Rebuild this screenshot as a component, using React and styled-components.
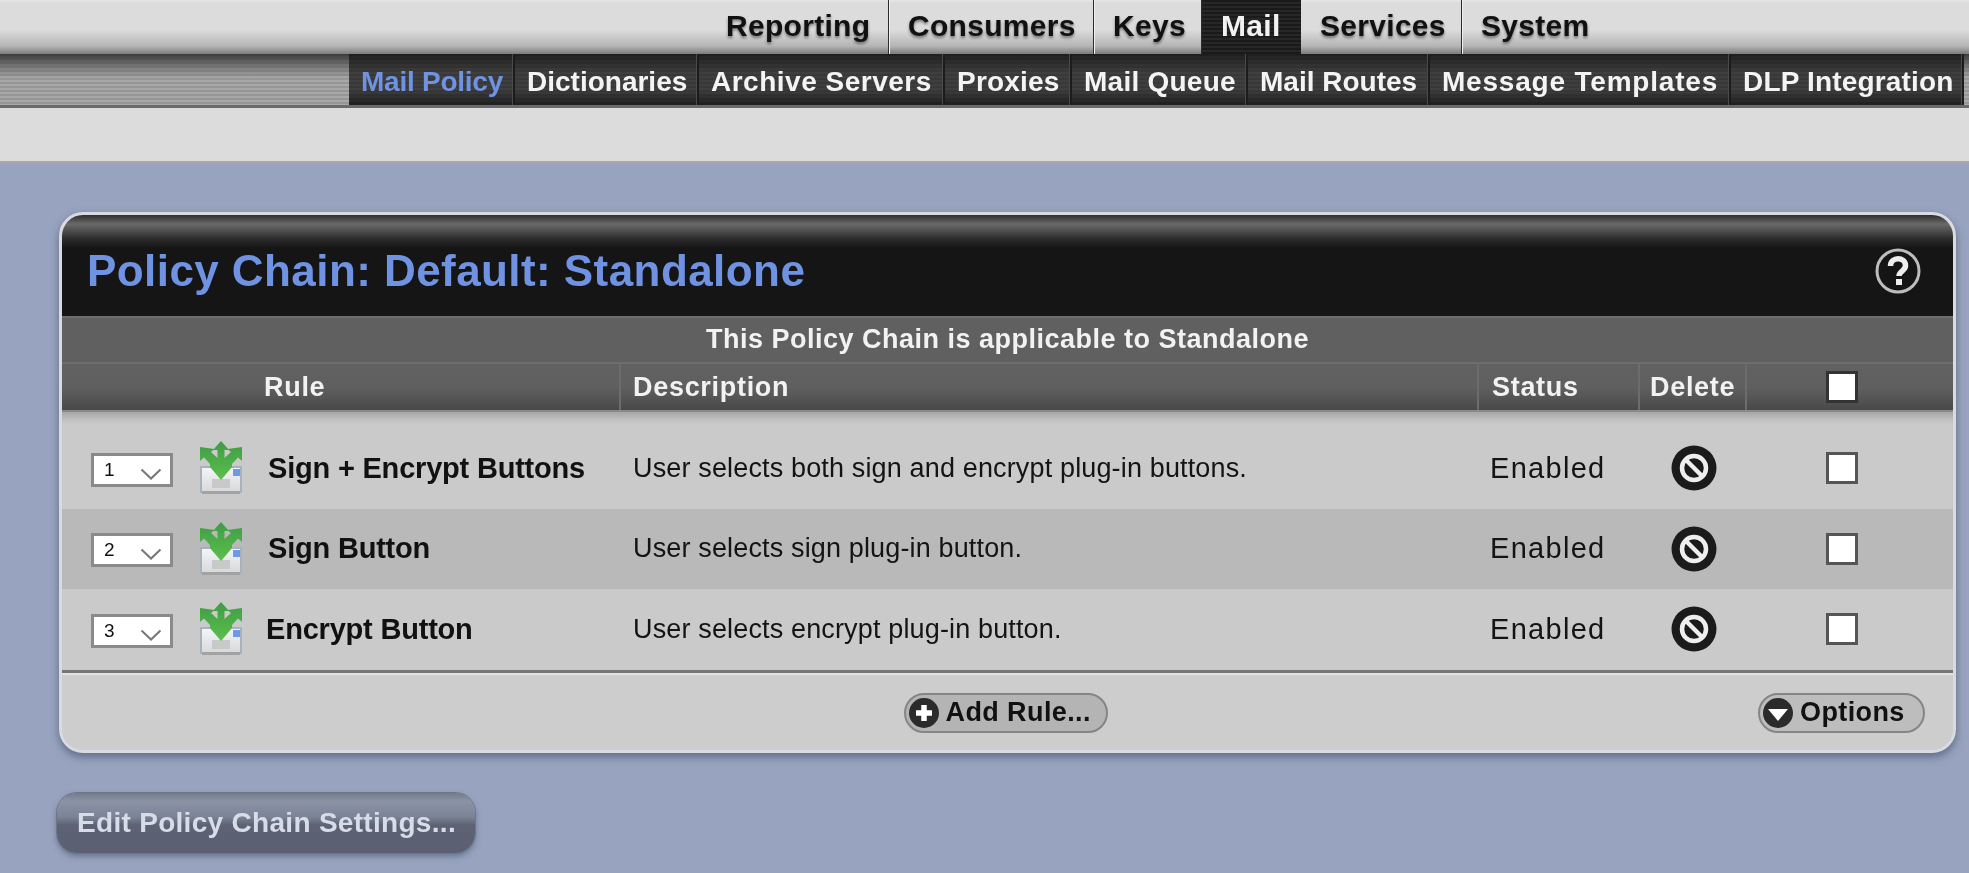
import React from 'react'
import styled, { createGlobalStyle } from 'styled-components'

const mainTabs = [
    { label: 'Reporting', width: 182 },
    { label: 'Consumers', width: 205 },
    { label: 'Keys', width: 108 },
    { label: 'Mail', width: 99, active: true },
    { label: 'Services', width: 161 },
    { label: 'System', width: 130, last: true },
]

const subTabs = [
    { label: 'Mail Policy', width: 166, spacing: -0.25, active: true },
    { label: 'Dictionaries', width: 184, spacing: 0 },
    { label: 'Archive Servers', width: 246, spacing: 0.5 },
    { label: 'Proxies', width: 127, spacing: 0.2 },
    { label: 'Mail Queue', width: 176, spacing: 0.25 },
    { label: 'Mail Routes', width: 182, spacing: 0 },
    { label: 'Message Templates', width: 301, spacing: 0.8 },
    { label: 'DLP Integration', width: 233, spacing: 0.17 },
]

const rules = [
    { id: 1, name: 'Sign + Encrypt Buttons', desc: 'User selects both sign and encrypt plug-in buttons.' },
    { id: 2, name: 'Sign Button', desc: 'User selects sign plug-in button.' },
    { id: 3, name: 'Encrypt Button', desc: 'User selects encrypt plug-in button.', tight: true },
]

const GlobalStyle = createGlobalStyle`
    html, body {
        margin: 0;
        padding: 0;
        background: #98a4bf;
    }
    body {
        font-family: "Liberation Sans", Arial, sans-serif;
        overflow: hidden;
    }
`

const Page = styled.div`
    width: 1969px;
    height: 873px;
    background: #98a4bf;
    overflow: hidden;
    filter: blur(0.5px);
`

const TopBar = styled.nav`
    height: 54px;
    box-sizing: border-box;
    padding-left: 707px;
    display: flex;
    background: linear-gradient(#e6e6e6 0, #dcdcdc 3px, #dcdcdc 30px, #b5b5b5 46px, #7c7c7c 54px);
`

const MainTab = styled.div`
    width: ${({ $width }) => $width}px;
    height: 54px;
    box-sizing: border-box;
    padding-left: 19px;
    font-size: 30px;
    font-weight: 700;
    line-height: 52px;
    letter-spacing: 0.3px;
    white-space: nowrap;
    color: ${({ $active }) => ($active ? '#f2f2f2' : '#111')};
    text-shadow: ${({ $active }) => ($active ? 'none' : '0 2px 3px rgba(0, 0, 0, 0.45)')};
    border-right: ${({ $last, $active }) => ($last || $active ? '0' : '1px solid #2c2c2c')};
    box-shadow: ${({ $last, $active }) => ($last || $active ? 'none' : '1px 0 0 #f0f0f0')};
    background: ${({ $active }) => ($active ? 'repeating-linear-gradient(#1a1a1a 0, #1a1a1a 2px, #272727 2px, #272727 4px)' : 'transparent')};
`

const SubBar = styled.nav`
    height: 54px;
    box-sizing: border-box;
    display: flex;
    justify-content: flex-end;
    padding-right: 5px;
    border-bottom: 3px solid #6a6a6a;
    background:
        linear-gradient(rgba(50, 50, 50, 0.9) 0, rgba(70, 70, 70, 0.5) 12px, rgba(120, 120, 120, 0) 24px),
        repeating-linear-gradient(#969696 0, #969696 2px, #a8a8a8 2px, #a8a8a8 4px);
`

const SubTab = styled.div`
    width: ${({ $width }) => $width}px;
    box-sizing: border-box;
    padding-left: 12px;
    font-size: 28px;
    font-weight: 700;
    line-height: 55px;
    letter-spacing: ${({ $spacing }) => $spacing}px;
    white-space: nowrap;
    color: ${({ $active }) => ($active ? '#6f92e2' : '#f4f4f4')};
    border-right: 2px solid #1c1c1c;
    box-shadow: inset -1px 0 0 #4a4a4a;
    background:
        linear-gradient(rgba(12, 12, 12, 0.6) 0, rgba(12, 12, 12, 0) 18px, rgba(12, 12, 12, 0) 36px, rgba(12, 12, 12, 0.6) 51px),
        repeating-linear-gradient(#383838 0, #383838 2px, #3f3f3f 2px, #3f3f3f 4px);
`

const Band = styled.div`
    height: 55px;
    box-sizing: border-box;
    background: #dcdcdc;
    border-bottom: 2px solid #a8a8a8;
`

const Panel = styled.section`
    width: 1897px;
    margin: 49px 0 0 59px;
    box-sizing: border-box;
    border: 3px solid #d8dbe2;
    border-radius: 24px;
    overflow: hidden;
    background: #cbcbcb;
    box-shadow: 0 4px 8px rgba(50, 58, 85, 0.55);
`

const PanelHead = styled.header`
    height: 101px;
    box-sizing: border-box;
    display: flex;
    align-items: center;
    justify-content: space-between;
    padding: 11px 31px 0 25px;
    background: linear-gradient(#2e2e2e 0, #6a6a6a 9px, #2c2c2c 24px, #151515 33px, #151515 100%);
`

const PanelTitle = styled.h1`
    margin: 0;
    font-size: 44px;
    font-weight: 700;
    letter-spacing: 0.43px;
    color: #6f92e2;
`

const HelpButton = styled.svg`
    width: 48px;
    height: 48px;
`

const Notice = styled.div`
    height: 46px;
    box-sizing: border-box;
    text-align: center;
    font-size: 27px;
    font-weight: 700;
    line-height: 42px;
    letter-spacing: 0.5px;
    color: #f2f2f2;
    background: #606060;
    border-top: 2px solid #6e6e6e;
`

const ruleColumns = '559px 858px 161px 107px 206px'

const HeadRow = styled.div`
    height: 50px;
    box-sizing: border-box;
    display: grid;
    grid-template-columns: ${ruleColumns};
    border-top: 2px solid #6e6e6e;
    border-bottom: 2px solid #8a8a8a;
    background: linear-gradient(#616161 0, #5f5f5f 24px, #464646 48px);
`

const HeadCell = styled.div`
    box-sizing: border-box;
    padding-left: ${({ $pad }) => $pad || 12}px;
    font-size: 27px;
    font-weight: 700;
    line-height: 44px;
    letter-spacing: 0.7px;
    color: #f2f2f2;
    border-right: ${({ $plain }) => ($plain ? '0' : '2px solid #6c6c6c')};
    display: flex;
    align-items: center;
`

const RowList = styled.div`
    padding-top: 16px;
    background: #cacaca;
    box-shadow: inset 0 12px 10px -8px rgba(0, 0, 0, 0.22);
`

const Row = styled.div`
    height: 80.5px;
    display: grid;
    grid-template-columns: ${ruleColumns};
    align-items: center;
    background: ${({ $odd }) => ($odd ? '#b9b9b9' : 'transparent')};
`

const RuleCell = styled.div`
    display: flex;
    align-items: center;
    padding-left: 29px;
`

const OrderSelect = styled.div`
    width: 82px;
    height: 34px;
    box-sizing: border-box;
    display: flex;
    align-items: center;
    justify-content: space-between;
    margin-top: 3px;
    padding: 0 8px 0 10px;
    border: 3px solid #8a8a8a;
    background: #fff;
    font-size: 19px;
    color: #111;
`

const Chevron = styled.svg`
    width: 22px;
    height: 12px;
    margin-top: 8px;
`

const RuleIcon = styled.svg`
    width: 42px;
    height: 54px;
    margin: 0 26px 0 27px;
    flex: none;
`

const RuleName = styled.span`
    font-size: 29px;
    font-weight: 700;
    letter-spacing: -0.2px;
    white-space: nowrap;
    color: #111;
    margin-left: ${({ $tight }) => ($tight ? -2 : 0)}px;
`

const DescCell = styled.div`
    padding-left: 12px;
    font-size: 27px;
    letter-spacing: 0.15px;
    color: #141414;
`

const StatusCell = styled.div`
    padding-left: 11px;
    font-size: 29px;
    letter-spacing: 1.3px;
    color: #141414;
`

const CenterCell = styled.div`
    display: flex;
    justify-content: center;
`

const DeleteIcon = styled.svg`
    width: 46px;
    height: 46px;
`

const CheckCell = styled.div`
    padding-left: 79px;
`

const CheckBox = styled.div`
    width: 32px;
    height: 32px;
    box-sizing: border-box;
    background: #fff;
    border: 3px solid ${({ $head }) => ($head ? '#333' : '#555')};
`

const PanelFoot = styled.footer`
    height: 80px;
    position: relative;
    box-sizing: border-box;
    display: flex;
    justify-content: center;
    align-items: center;
    padding: 3px 4px 0 0;
    border-top: 3px solid #777;
    box-shadow: inset 0 2px 0 #e2e2e2;
    background: #cdcdcd;
`

const PillButton = styled.div`
    height: 40px;
    width: ${({ $width }) => $width}px;
    box-sizing: border-box;
    display: flex;
    align-items: center;
    gap: 7px;
    padding-left: 3px;
    border: 2px solid #858585;
    border-radius: 20px;
    background: #b4b4b4;
    font-size: 27px;
    font-weight: 700;
    letter-spacing: 0.4px;
    white-space: nowrap;
    color: #111;
`

const OptionsButton = styled(PillButton)`
    position: absolute;
    right: 28px;
    top: 20px;
    background: #bdbdbd;
`

const PillIcon = styled.svg`
    width: 30px;
    height: 30px;
    flex: none;
`

const EditButton = styled.div`
    width: 418px;
    height: 60px;
    box-sizing: border-box;
    margin: 40px 0 0 57px;
    padding-left: 20px;
    border-radius: 20px;
    font-size: 28px;
    font-weight: 700;
    line-height: 59px;
    letter-spacing: 0.3px;
    white-space: nowrap;
    color: #d6dce8;
    background: linear-gradient(#727a8c 0, #8b93a5 8px, #7b8396 24px, #5d6374 32px, #5a6071 100%);
    box-shadow: 0 0 0 1px #6d7588, 0 3px 6px rgba(50, 58, 85, 0.5);
`

const Envelope = () => (
    <RuleIcon viewBox="1 0 42 54">
        <defs>
            <linearGradient id="envFill" x1="0" y1="0" x2="0" y2="1">
                <stop offset="0" stopColor="#f4f6fa" />
                <stop offset="1" stopColor="#d6d8da" />
            </linearGradient>
            <linearGradient id="arrowFill" x1="0" y1="0" x2="0" y2="1">
                <stop offset="0" stopColor="#3f9b45" />
                <stop offset="1" stopColor="#5cc04c" />
            </linearGradient>
        </defs>
        <rect x="2" y="26" width="40" height="25" fill="url(#envFill)" stroke="#a8b2bd" strokeWidth="2" />
        <rect x="3" y="50" width="38" height="3" fill="#a2a2a2" />
        <path d="M13 38 L31 38 L31 47 L13 47 Z" fill="#c9c9c9" />
        <rect x="34" y="28" width="7" height="7" fill="#6d9ae8" />
        <path d="M22 0 L30 9 L25.5 9 L25.5 17 L32 11 L28.5 8 L43 6 L43 20 L39 16.5 L33 23 L33 26 L22 39 L11 26 L11 23 L5 16.5 L1 20 L1 6 L15.5 8 L12 11 L18.5 17 L18.5 9 L14 9 Z" fill="url(#arrowFill)" />
    </RuleIcon>
)

const App = () => (
    <>
        <GlobalStyle />
        <Page>
            <TopBar>
                {mainTabs.map((tab) => (
                    <MainTab key={tab.label} $width={tab.width} $active={tab.active} $last={tab.last}>
                        {tab.label}
                    </MainTab>
                ))}
            </TopBar>
            <SubBar>
                {subTabs.map((tab) => (
                    <SubTab key={tab.label} $width={tab.width} $active={tab.active} $spacing={tab.spacing}>
                        {tab.label}
                    </SubTab>
                ))}
            </SubBar>
            <Band />
            <Panel>
                <PanelHead>
                    <PanelTitle>Policy Chain: Default: Standalone</PanelTitle>
                    <HelpButton viewBox="0 0 48 48">
                        <circle cx="24" cy="24" r="21" fill="#151515" stroke="#bdbdbd" strokeWidth="3" />
                        <path d="M16.5 19 C16.5 9.5 31.5 9.5 31.5 18.5 C31.5 24 25 24 25 29" fill="none" stroke="#eee" strokeWidth="5.5" />
                        <rect x="22" y="32" width="6" height="6" fill="#eee" />
                    </HelpButton>
                </PanelHead>
                <Notice>This Policy Chain is applicable to Standalone</Notice>
                <HeadRow>
                    <HeadCell $pad={202}>Rule</HeadCell>
                    <HeadCell>Description</HeadCell>
                    <HeadCell $pad={13}>Status</HeadCell>
                    <HeadCell $pad={10}>Delete</HeadCell>
                    <HeadCell $pad={79} $plain>
                        <CheckBox $head />
                    </HeadCell>
                </HeadRow>
                <RowList>
                    {rules.map((rule, i) => (
                        <Row key={rule.id} $odd={i === 1}>
                            <RuleCell>
                                <OrderSelect>
                                    {rule.id}
                                    <Chevron viewBox="0 0 22 12">
                                        <path d="M1.5 1.5 L11 10.5 L20.5 1.5" fill="none" stroke="#777" strokeWidth="2" />
                                    </Chevron>
                                </OrderSelect>
                                <Envelope />
                                <RuleName $tight={rule.tight}>{rule.name}</RuleName>
                            </RuleCell>
                            <DescCell>{rule.desc}</DescCell>
                            <StatusCell>Enabled</StatusCell>
                            <CenterCell>
                                <DeleteIcon viewBox="0 0 46 46">
                                    <circle cx="23" cy="23" r="22.5" fill="#1b1b1b" />
                                    <circle cx="23" cy="23" r="12" fill="none" stroke="#eee" strokeWidth="4.5" />
                                    <path d="M14.5 14.5 L31.5 31.5" stroke="#eee" strokeWidth="4.5" />
                                </DeleteIcon>
                            </CenterCell>
                            <CheckCell>
                                <CheckBox />
                            </CheckCell>
                        </Row>
                    ))}
                </RowList>
                <PanelFoot>
                    <PillButton $width={204}>
                        <PillIcon viewBox="0 0 30 30">
                            <circle cx="15" cy="15" r="15" fill="#2b2b2b" />
                            <path d="M15 7 V23 M7 15 H23" stroke="#fff" strokeWidth="5.5" />
                        </PillIcon>
                        Add Rule...
                    </PillButton>
                    <OptionsButton $width={167}>
                        <PillIcon viewBox="0 0 30 30">
                            <circle cx="15" cy="15" r="15" fill="#2b2b2b" />
                            <path d="M5 11 H25 L15 23 Z" fill="#fff" />
                        </PillIcon>
                        Options
                    </OptionsButton>
                </PanelFoot>
            </Panel>
            <EditButton>Edit Policy Chain Settings...</EditButton>
        </Page>
    </>
)

export default App
